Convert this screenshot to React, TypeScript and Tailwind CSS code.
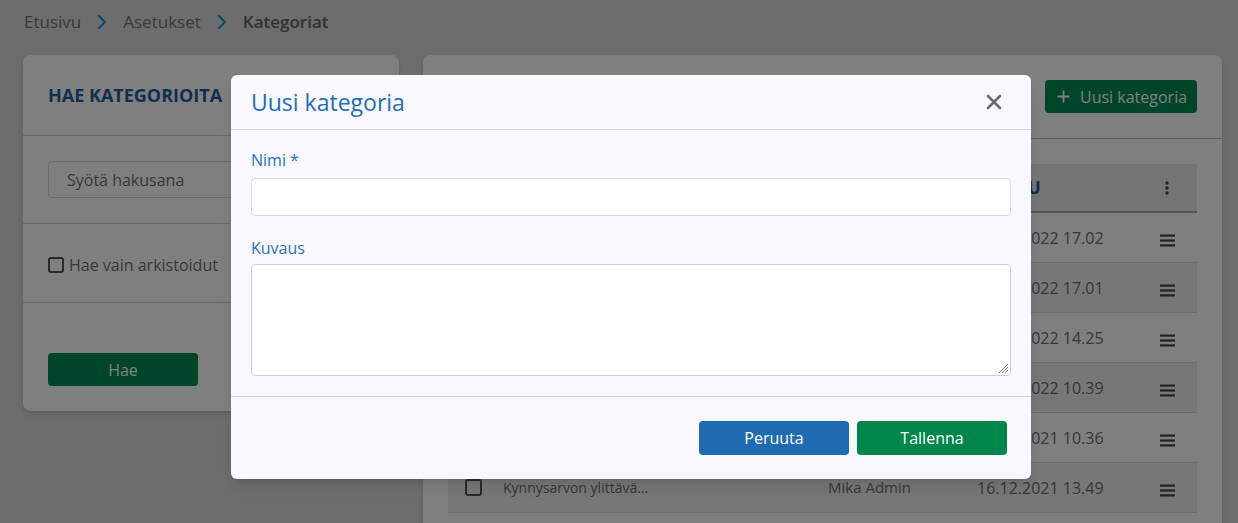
import React from "react";

function Chevron() {
  return (
    <svg width="10" height="16" viewBox="0 0 10 16" className="mx-[16px]">
      <path d="M2 2 L8 8 L2 14" fill="none" stroke="#2296c8" strokeWidth="2.4" strokeLinecap="round" strokeLinejoin="round" />
    </svg>
  );
}

function Hamburger() {
  return (
    <svg width="15" height="13" viewBox="0 0 15 13">
      <rect x="0" y="0.5" width="15" height="2.2" fill="#444" />
      <rect x="0" y="5.4" width="15" height="2.2" fill="#444" />
      <rect x="0" y="10.3" width="15" height="2.2" fill="#444" />
    </svg>
  );
}

function Kebab() {
  return (
    <svg width="6" height="16" viewBox="0 0 6 16">
      <circle cx="3" cy="3" r="1.7" fill="#444" />
      <circle cx="3" cy="8" r="1.7" fill="#444" />
      <circle cx="3" cy="13" r="1.7" fill="#444" />
    </svg>
  );
}

const rows = [
  { name: "Laitteen huoltotarve", by: "Mika Admin", date: "12.01.2022 17.02" },
  { name: "Hälytysraja ylitetty", by: "Mika Admin", date: "12.01.2022 17.01" },
  { name: "Tarkastus", by: "Mika Admin", date: "10.01.2022 14.25" },
  { name: "Vikailmoitus", by: "Mika Admin", date: "05.01.2022 10.39" },
  { name: "Yleinen", by: "Mika Admin", date: "20.12.2021 10.36" },
  { name: "Kynnysarvon ylittävä...", by: "Mika Admin", date: "16.12.2021 13.49" },
];

export default function App() {
  return (
    <div className="relative w-full h-[523px] overflow-hidden bg-[#dadada] font-['Open_Sans',sans-serif]">
      {/* Breadcrumb */}
      <div className="h-[44px] pl-[24px] flex items-center text-[17px] text-[#747474]">
        <span>Etusivu</span>
        <Chevron />
        <span>Asetukset</span>
        <Chevron />
        <span className="font-semibold text-[#626262]">Kategoriat</span>
      </div>

      <div className="flex gap-[24px] pl-[23px] pr-[16px] pt-[11px]">
        {/* Left card */}
        <div className="w-[376px] shrink-0 bg-white rounded-[8px] shadow-md self-start">
          <div className="h-[81px] flex items-center px-[25px] border-b border-[#cfcfcf]">
            <span className="text-[18px] font-bold text-[#1f5f9e]">HAE KATEGORIOITA</span>
          </div>
          <div className="px-[25px] pt-[25px] pb-[25px] border-b border-[#cfcfcf]">
            <div className="h-[37px] border border-[#d9d9d9] rounded-[4px] flex items-center pl-[18px] text-[16px] text-[#707070]">
              Syötä hakusana
            </div>
          </div>
          <div className="h-[79px] px-[25px] flex items-center border-b border-[#cfcfcf]">
            <span className="w-[16px] h-[16px] border-2 border-[#555] rounded-[3px] mr-[5px] mt-[4px]" />
            <span className="text-[16px] text-[#707070] mt-[4px]">Hae vain arkistoidut</span>
          </div>
          <div className="px-[25px] pt-[50px] pb-[25px]">
            <div className="w-[150px] h-[33px] rounded-[4px] bg-[#008a50] flex items-center justify-center text-white text-[16px]">
              Hae
            </div>
          </div>
        </div>

        {/* Right card */}
        <div className="flex-1 bg-white rounded-[8px] shadow-md h-[480px]">
          <div className="h-[84px] flex items-center justify-end px-[25px] border-b border-[#bdbdbd]">
            <div className="h-[33px] w-[152px] rounded-[4px] bg-[#008a50] flex items-center text-white text-[16px] pl-[12px] gap-[10px]">
              <svg width="13" height="13" viewBox="0 0 13 13">
                <path d="M6.5 0.5 V12.5 M0.5 6.5 H12.5" stroke="white" strokeWidth="1.8" />
              </svg>
              <span>Uusi kategoria</span>
            </div>
          </div>
          <div className="px-[25px] pt-[25px]">
            <div className="grid grid-cols-[55px_325px_149px_1fr_60px] h-[49px] bg-[#e8e8e8] border-b-2 border-[#a8a8a8] items-center text-[17px] font-bold text-[#1f5f9e]">
              <div />
              <div>NIMI</div>
              <div>LUOJA</div>
              <div className="pl-[5px]">LUOTU</div>
              <div className="flex justify-center"><Kebab /></div>
            </div>
            {rows.map((r, i) => (
              <div
                key={i}
                className={`grid grid-cols-[55px_325px_149px_1fr_60px] h-[50px] border-b border-[#d6d6d6] items-center text-[#6e6e6e] ${i % 2 === 1 ? "bg-[#eeeeee]" : "bg-white"}`}
              >
                <div className="pl-[17px]">
                  <span className="block w-[17px] h-[17px] border-2 border-[#555] rounded-[3px]" />
                </div>
                <div className="text-[14px]">{r.name}</div>
                <div className="text-[15px]">{r.by}</div>
                <div className="text-[16px]">{r.date}</div>
                <div className="flex justify-center pt-[6px]"><Hamburger /></div>
              </div>
            ))}
          </div>
        </div>
      </div>

      {/* Overlay */}
      <div className="absolute inset-0 bg-black/50" />

      {/* Modal */}
      <div className="absolute left-[231px] top-[75px] w-[800px] bg-[#f8f8fd] rounded-[6px] shadow-lg">
        <div className="h-[55px] flex items-center justify-between px-[20px] border-b border-[#d4d4da]">
          <span className="text-[23px] font-medium text-[#1f6db5]">Uusi kategoria</span>
          <svg width="16" height="16" viewBox="0 0 16 16" className="mr-[9px]">
            <path d="M2 2 L14 14 M14 2 L2 14" stroke="#6b6b6b" strokeWidth="2.6" strokeLinecap="round" />
          </svg>
        </div>
        <div className="px-[20px] pt-[19px] pb-[20px] border-b border-[#d4d4da]">
          <div className="text-[16px] leading-[22px] text-[#2a72bd]">Nimi *</div>
          <div className="mt-[7px] h-[38px] bg-white border border-[#dcdce0] rounded-[4px]" />
          <div className="mt-[21px] text-[16px] leading-[22px] text-[#2a72bd]">Kuvaus</div>
          <div className="relative mt-[5px] h-[112px] bg-white border border-[#cfcfd6] rounded-[4px]">
            <svg width="12" height="12" viewBox="0 0 12 12" className="absolute right-[1px] bottom-[1px]">
              <path d="M11 2 L2 11 M11 5 L5 11 M11 8 L8 11" stroke="#777" strokeWidth="1" />
            </svg>
          </div>
        </div>
        <div className="flex justify-end gap-[8px] pt-[24px] pb-[24px] pr-[24px]">
          <div className="w-[150px] h-[34px] rounded-[4px] bg-[#1e6bb1] flex items-center justify-center text-white text-[16px]">
            Peruuta
          </div>
          <div className="w-[150px] h-[34px] rounded-[4px] bg-[#00854b] flex items-center justify-center text-white text-[16px]">
            Tallenna
          </div>
        </div>
      </div>
    </div>
  );
}
